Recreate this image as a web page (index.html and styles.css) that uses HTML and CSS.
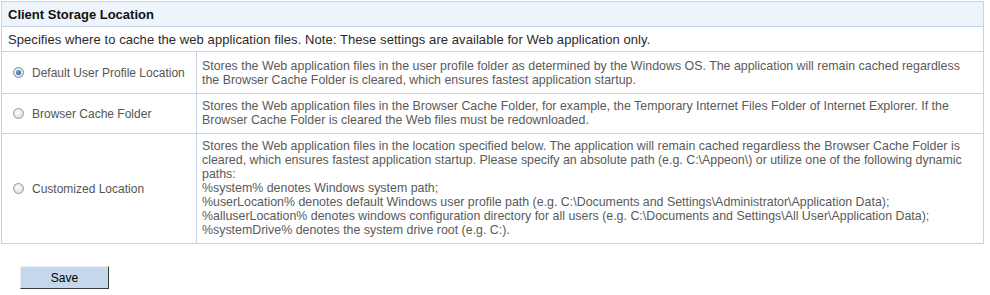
FILE: index.html
```html
<!DOCTYPE html>
<html>
<head>
<meta charset="utf-8">
<link rel="stylesheet" href="styles.css">
</head>
<body>
<div class="panel">
  <div class="title">Client Storage Location</div>
  <div class="desc">Specifies where to cache the web application files. Note: These settings are available for Web application only.</div>
  <div class="row first">
    <div class="label"><span class="radio on"></span>Default User Profile Location</div>
    <div class="text">Stores the Web application files in the user profile folder as determined by the Windows OS. The application will remain cached regardless<br>the Browser Cache Folder is cleared, which ensures fastest application startup.</div>
  </div>
  <div class="row">
    <div class="label"><span class="radio"></span>Browser Cache Folder</div>
    <div class="text">Stores the Web application files in the Browser Cache Folder, for example, the Temporary Internet Files Folder of Internet Explorer. If the<br>Browser Cache Folder is cleared the Web files must be redownloaded.</div>
  </div>
  <div class="row">
    <div class="label"><span class="radio"></span>Customized Location</div>
    <div class="text">Stores the Web application files in the location specified below. The application will remain cached regardless the Browser Cache Folder is<br>cleared, which ensures fastest application startup. Please specify an absolute path (e.g. C:\Appeon\) or utilize one of the following dynamic<br>paths:<br>%system% denotes Windows system path;<br>%userLocation% denotes default Windows user profile path (e.g. C:\Documents and Settings\Administrator\Application Data);<br>%alluserLocation% denotes windows configuration directory for all users (e.g. C:\Documents and Settings\All User\Application Data);<br>%systemDrive% denotes the system drive root (e.g. C:).</div>
  </div>
</div>
<div class="actions"><button class="save">Save</button></div>
</body>
</html>
```
FILE: styles.css
```css
html, body { margin: 0; padding: 0; background: #fff; }
body { padding: 1px 0 0 1px; font-family: "Liberation Sans", Arial, sans-serif; font-size: 12px; color: #555; }
.panel { width: 981px; border: 1px solid #c5d3e6; border-bottom: none; }
.title { height: 24px; line-height: 25px; background: #eef4fc; border-bottom: 1px solid #c5d3e6; padding-left: 6px; font-weight: bold; font-size: 13px; color: #111; }
.desc { height: 24px; line-height: 25px; border-bottom: 1px solid #c5d3e6; padding-left: 6px; color: #2a2a2a; font-size: 13px; letter-spacing: 0.07px; }
.row { display: flex; border-bottom: 1px solid #c5d3e6; }
.label { width: 195px; flex: none; border-right: 1px solid #c5d3e6; display: flex; align-items: center; padding-left: 11px; box-sizing: border-box; color: #555; font-size: 12px; }
.text { padding: 5px 5px 6px 5px; line-height: 14px; font-size: 12.4px; color: #5a5a5a; }
.row.first .text { padding: 7px 5px 6px 5px; }
.radio { width: 11px; height: 11px; border-radius: 50%; box-sizing: border-box; border: 1px solid #9a9a9a; background: radial-gradient(circle at 45% 40%, #fff 0, #e6e6e6 55%, #cfcfcf 100%); margin-right: 8px; display: inline-flex; align-items: center; justify-content: center; }
.radio.on { border-color: #7a8aa0; }
.radio.on::after { content: ""; width: 5px; height: 5px; border-radius: 50%; background: radial-gradient(circle at 40% 35%, #6aa6e8, #1b4f9a); }
.actions { padding: 22px 0 0 19px; }
.save { width: 89px; height: 23px; background: #c5d7ea; border: 1px solid; border-color: #e8eef6 #3c3c3c #3c3c3c #e8eef6; font-family: "Liberation Sans", Arial, sans-serif; font-size: 12px; color: #000; padding: 0; }
```
